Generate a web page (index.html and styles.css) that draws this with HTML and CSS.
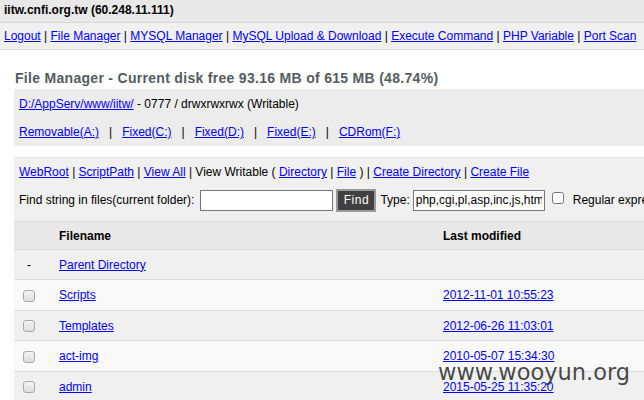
FILE: index.html
```html
<!DOCTYPE html>
<html>
<head>
<meta charset="utf-8">
<link rel="stylesheet" href="styles.css">
</head>
<body>
<div class="head">iitw.cnfi.org.tw (60.248.11.111)</div>
<div class="nav"><a href="#">Logout</a> | <a href="#">File Manager</a> | <a href="#">MYSQL Manager</a> | <a href="#">MySQL Upload &amp; Download</a> | <a href="#">Execute Command</a> | <a href="#">PHP Variable</a> | <a href="#">Port Scan</a></div>
<div class="main">
  <h2 class="title">File Manager - Current disk free 93.16 MB of 615 MB (48.74%)</h2>
  <div class="box1">
    <div class="line"><a href="#">D:/AppServ/www/iitw/</a> - 0777 / drwxrwxrwx (Writable)</div>
    <div class="line drives"><a href="#">Removable(A:)</a><span class="sep">|</span><a href="#">Fixed(C:)</a><span class="sep">|</span><a href="#">Fixed(D:)</a><span class="sep">|</span><a href="#">Fixed(E:)</a><span class="sep">|</span><a href="#">CDRom(F:)</a></div>
  </div>
  <div class="box2">
    <div class="links"><a href="#">WebRoot</a> | <a href="#">ScriptPath</a> | <a href="#">View All</a> | View Writable ( <a href="#">Directory</a> | <a href="#">File</a> ) | <a href="#">Create Directory</a> | <a href="#">Create File</a></div>
    <div class="find">
      <span>Find string in files(current folder):</span>
      <input class="q" type="text">
      <button class="btn">Find</button>
      <span class="tl">Type:</span>
      <input class="type" type="text" value="php,cgi,pl,asp,inc,js,htm">
      <input class="chk" type="checkbox">
      <span class="re">Regular expressions</span>
    </div>
  </div>
  <div class="table">
    <div class="row th"><div class="c1"></div><div class="c2">Filename</div><div class="c3">Last modified</div></div>
    <div class="row odd"><div class="c1 dash">-</div><div class="c2"><a href="#">Parent Directory</a></div><div class="c3"></div></div>
    <div class="row even"><div class="c1"><span class="cb"></span></div><div class="c2"><a href="#">Scripts</a></div><div class="c3"><a href="#">2012-11-01 10:55:23</a></div></div>
    <div class="row odd"><div class="c1"><span class="cb"></span></div><div class="c2"><a href="#">Templates</a></div><div class="c3"><a href="#">2012-06-26 11:03:01</a></div></div>
    <div class="row even"><div class="c1"><span class="cb"></span></div><div class="c2"><a href="#">act-img</a></div><div class="c3"><a href="#">2010-05-07 15:34:30</a></div></div>
    <div class="row odd"><div class="c1"><span class="cb"></span></div><div class="c2"><a href="#">admin</a></div><div class="c3"><a href="#">2015-05-25 11:35:20</a></div></div>
  </div>
</div>
<div class="wm">www.wooyun.org</div>
</body>
</html>
```
FILE: styles.css
```css
html, body { margin: 0; padding: 0; }
body {
  font-family: "Liberation Sans", Arial, sans-serif;
  font-size: 12px;
  color: #000;
  background: #fff;
  overflow: hidden;
  width: 644px;
  height: 400px;
  position: relative;
}
a { color: #0000ff; text-decoration: underline; }
.head {
  height: 22px;
  line-height: 20px;
  background: #e8e8e8;
  border-bottom: 1px solid #d6d6d6;
  padding-left: 4px;
  font-weight: bold;
  white-space: nowrap;
}
.nav {
  height: 26px;
  line-height: 27px;
  background: #f0f0f0;
  border-bottom: 1px solid #dcdcdc;
  padding-left: 4px;
  white-space: nowrap;
}
.main { padding: 0 0 0 14px; width: 720px; }
.title {
  margin: 0;
  padding: 20px 0 0 1px;
  height: 19px;
  line-height: 16px;
  font-size: 14px;
  font-weight: bold;
  color: #555b60;
  white-space: nowrap;
  letter-spacing: 0.3px;
}
.box1 {
  background: #ececec;
  height: 57px;
  padding-left: 5px;
}
.box1 .line { height: 29px; line-height: 30px; }
.box1 .drives { line-height: 28px; }
.sep { margin: 0 10px; }
.box2 {
  margin-top: 11px;
  border-top: 1px solid #e4e4e4;
  background: #f0f0f0;
  height: 63px;
  padding-left: 5px;
}
.links { height: 29px; line-height: 29px; white-space: nowrap; }
.find { display: flex; align-items: center; height: 26px; white-space: nowrap; }
.find .q {
  margin: 0 0 0 6px;
  width: 127px;
  height: 17px;
  padding: 1px 2px;
  border: 1px solid #777;
  background: #fff;
  box-sizing: content-box;
}
.btn {
  margin: 0 0 0 3px;
  width: 40px;
  height: 23px;
  background: #404040;
  color: #fff;
  border: 2px solid #999;
  font-family: "Liberation Sans", Arial, sans-serif;
  font-size: 12px;
  padding: 0;
  letter-spacing: 0.5px;
}
.find .tl { margin-left: 4px; }
.find .type {
  margin: 0 0 0 3px;
  width: 126px;
  height: 17px;
  padding: 1px 2px;
  border: 1px solid #777;
  background: #fff;
  font-family: "Liberation Sans", Arial, sans-serif;
  font-size: 12px;
  box-sizing: content-box;
}
.chk { margin: 0 0 4px 7px; width: 12px; height: 12px; }
.re { margin-left: 9px; }
.table { border-top: 1px solid #dcdcdc; }
.row {
  display: flex;
  align-items: center;
  height: 29px;
  border-bottom: 1px solid #dcdcdc;
}
.row.th { height: 27px; background: #e8e8e8; font-weight: bold; }
.row.odd { background: #f0f0f0; }
.row.even { background: #f9f9f9; height: 30px; }
.c1 { width: 30px; text-align: center; flex: none; }
.c2 { width: 384px; padding-left: 15px; flex: none; }
.c3 { flex: none; }
.cb {
  display: inline-block;
  width: 10px;
  height: 10px;
  border: 1px solid #a8a8a8;
  border-radius: 3px;
  background: linear-gradient(#f4f4f4, #dedede);
  vertical-align: middle;
}
.wm {
  position: absolute;
  left: 438px;
  top: 359px;
  font-family: "DejaVu Sans", "Noto Sans", sans-serif;
  font-size: 22.5px;
  color: rgba(40, 40, 40, 0.85);
  white-space: nowrap;
}
```
